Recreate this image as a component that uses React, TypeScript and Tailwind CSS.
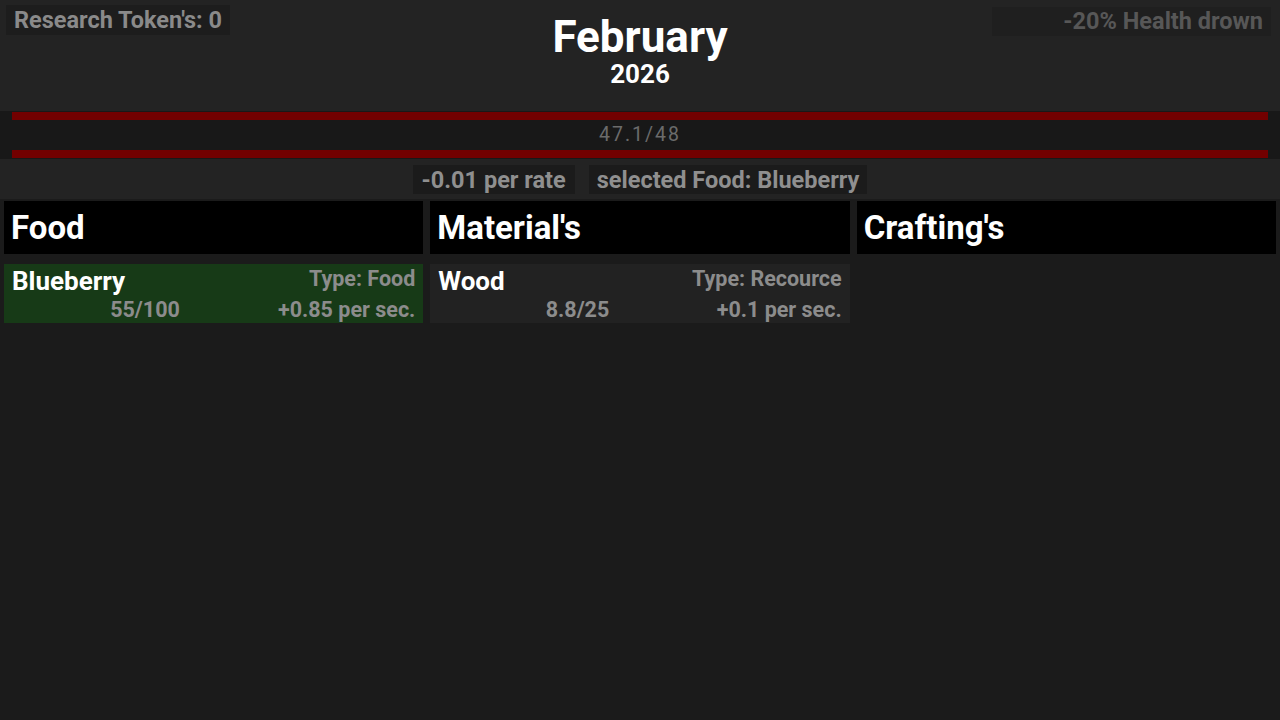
const items = [
  {
    name: "Blueberry",
    type: "Type: Food",
    amount: "55/100",
    rate: "+0.85 per sec.",
    selected: true
  }
];

const materials = [
  {
    name: "Wood",
    type: "Type: Recource",
    amount: "8.8/25",
    rate: "+0.1 per sec.",
    selected: false
  }
];

type Item = {
  name: string;
  type: string;
  amount: string;
  rate: string;
  selected: boolean;
};

function ItemCard({ item }: { item: Item }) {
  return (
    <div className={`flex h-[59px] flex-col px-2 pt-[1px] ${item.selected ? "bg-[#173a17]" : "bg-[#222222]"}`}>
      <div className="flex items-start justify-between">
        <span className="text-[26px] leading-[32px] font-bold text-white">{item.name}</span>
        <span className="text-[21.5px] leading-[28px] font-bold text-[#8c8c8c]">{item.type}</span>
      </div>
      <div className="flex items-center justify-between text-[21.5px] leading-[26px] font-bold text-[#8c8c8c]">
        <span />
        <span>{item.amount}</span>
        <span>{item.rate}</span>
      </div>
    </div>
  );
}

function Column({ title, list }: { title: string; list: Item[] }) {
  return (
    <div className="flex flex-col gap-[10px]">
      <div className="flex h-[53px] items-center bg-black px-[7px] text-[33px] font-bold text-white">{title}</div>
      {list.map((item) => (
        <ItemCard item={item} key={item.name} />
      ))}
    </div>
  );
}

export default function App() {
  return (
    <div className="min-h-[720px] bg-[#1b1b1b] font-['Roboto',sans-serif]">
      <div className="bg-[#232323]">
        <header className="grid h-[111px] grid-cols-[1fr_auto_1fr] items-start">
          <div className="pt-[5px] pl-[6px]">
            <span className="inline-block h-[30px] bg-[#1d1d1d] px-2 text-[23.5px] leading-[30px] font-bold text-[#8a8a8a]">
              Research Token's: 0
            </span>
          </div>
          <div className="flex flex-col items-center pt-[13px] text-white">
            <span className="text-[44px] leading-[48px] font-bold">February</span>
            <span className="text-[26px] leading-[26px] font-bold">2026</span>
          </div>
          <div className="flex justify-end pt-[7px] pr-[9px]">
            <span className="inline-block h-[29px] w-[279px] bg-[#1f1f1f] pr-2 text-right text-[23.5px] leading-[29px] font-bold text-[#575757]">
              -20% Health drown
            </span>
          </div>
        </header>

        <div className="flex h-[48px] flex-col justify-between bg-[#181818] py-[1px] px-3">
          <div className="h-[8px] bg-[#720000]" />
          <div className="text-center text-[19.5px] leading-[20px] tracking-[2px] text-[#6b6b6b]">47.1/48</div>
          <div className="h-[8px] bg-[#720000]" />
        </div>

        <div className="flex h-[40px] items-start justify-center gap-[14px] pt-[6px]">
          <span className="h-[29px] bg-[#1b1b1b] px-[9px] text-[23.5px] leading-[31px] font-bold text-[#8f8f8f]">-0.01 per rate</span>
          <span className="h-[29px] bg-[#1b1b1b] px-[8px] text-[23.5px] leading-[31px] font-bold text-[#8f8f8f]">selected Food: Blueberry</span>
        </div>
      </div>

      <main className="grid grid-cols-3 gap-[7px] px-[4px] pt-[2px]">
        <Column title="Food" list={items} />
        <Column title="Material's" list={materials} />
        <Column title="Crafting's" list={[]} />
      </main>
    </div>
  );
}
